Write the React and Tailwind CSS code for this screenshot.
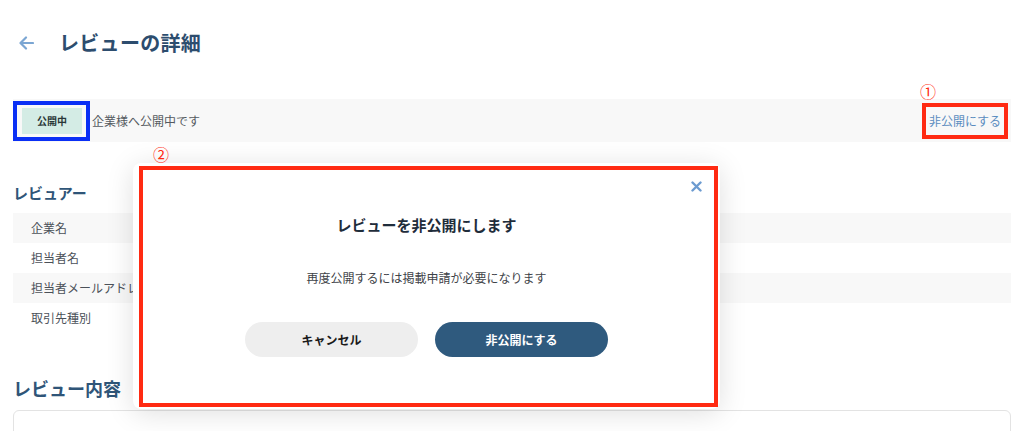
import React from "react";

const rows = ["企業名", "担当者名", "担当者メールアドレス", "取引先種別"];

const ReviewDetail = () => {
  return (
    <div className="relative w-full h-[431px] overflow-hidden bg-white font-['Noto_Sans_CJK_JP',sans-serif]">
      {/* header */}
      <div className="pt-[29px] h-[57px] flex items-center pl-[19px]">
        <svg width="15" height="14" viewBox="0 0 15 14" fill="none">
          <path
            d="M14 7H2M7 1.5L1.5 7L7 12.5"
            stroke="#7ba6d3"
            strokeWidth="2.2"
            strokeLinecap="round"
            strokeLinejoin="round"
          />
        </svg>
        <h1 className="ml-[25px] text-[20px] leading-[28px] font-bold tracking-[0.3px] text-[#2d4d6e]">
          レビューの詳細
        </h1>
      </div>

      {/* status bar */}
      <div className="mt-[42px] mx-[13px] h-[43px] bg-[#f8f8f8] flex items-center justify-between">
        <div className="flex items-center">
          <div className="border-[4px] border-[#0a2ff5] h-[40px] pl-[5px] pr-[4px] flex items-center">
            <span className="bg-[#d4ece5] w-[60px] h-[26px] flex items-center justify-center text-[10px] font-bold text-[#2b3838]">
              公開中
            </span>
          </div>
          <span className="ml-[2px] text-[12px] text-[#555a60]">企業様へ公開中です</span>
        </div>
        <div className="relative mr-[3px]">
          <span className="absolute -top-[21px] -left-[2px] text-[16px] leading-[18px] text-[#ff2a12]">①</span>
          <div className="border-[4px] border-[#ff2a12] h-[36px] px-[3px] flex items-center">
            <span className="text-[12px] text-[#5a8cbf]">非公開にする</span>
          </div>
        </div>
      </div>

      {/* reviewer */}
      <div className="mx-[13px]">
        <h2 className="mt-[40px] mb-[9px] text-[15px] leading-[22px] font-bold text-[#2f5578]">
          レビュアー
        </h2>
        {rows.map((label, i) => (
          <div
            key={label}
            className={
              i % 2 === 0
                ? "h-[30px] flex items-center pl-[18px] bg-[#f8f8f8] text-[12px] text-[#4b5159]"
                : "h-[30px] flex items-center pl-[18px] bg-white text-[12px] text-[#4b5159]"
            }
          >
            {label}
          </div>
        ))}

        <h2 className="mt-[42px] text-[18px] leading-[26px] font-bold text-[#2f5578]">
          レビュー内容
        </h2>
        <div className="mt-[9px] h-[60px] border border-[#e3e3e3] rounded-[6px]" />
      </div>

      {/* modal */}
      <div className="absolute left-[133px] top-[163px] w-[587px] h-[246px] bg-white rounded-[8px] shadow-[0_4px_28px_rgba(0,0,0,0.13)]">
        <span className="absolute left-[20px] -top-[18px] text-[16px] leading-[18px] text-[#ff2a12]">②</span>
        <div className="absolute left-[6px] top-[3px] right-[2px] bottom-[2px] border-[4px] border-[#ff2a12] pointer-events-none" />
        <button className="absolute right-[18px] top-[18px]">
          <svg width="11" height="11" viewBox="0 0 11 11">
            <path d="M1.5 1.5L9.5 9.5M9.5 1.5L1.5 9.5" stroke="#6c9bd0" strokeWidth="2.4" strokeLinecap="round" />
          </svg>
        </button>
        <div className="flex flex-col items-center pt-[51px]">
          <h3 className="text-[15px] leading-[22px] font-bold text-[#1f2d3b]">レビューを非公開にします</h3>
          <p className="mt-[33px] text-[12px] leading-[18px] text-[#3d4247]">
            再度公開するには掲載申請が必要になります
          </p>
          <div className="mt-[35px] flex gap-[17px]">
            <button className="w-[173px] h-[35px] rounded-full bg-[#eeeeee] text-[12px] font-bold text-[#1a1a1a]">
              キャンセル
            </button>
            <button className="w-[173px] h-[35px] rounded-full bg-[#2f5a7e] text-[12px] font-bold text-white">
              非公開にする
            </button>
          </div>
        </div>
      </div>
    </div>
  );
};

export default ReviewDetail;
